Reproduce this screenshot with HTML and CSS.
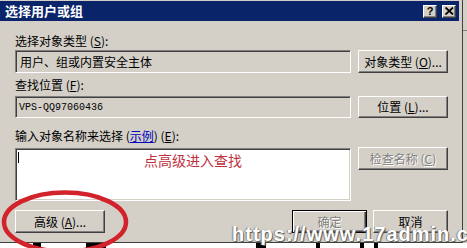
FILE: index.html
```html
<!DOCTYPE html>
<html>
<head>
<meta charset="utf-8">
<link rel="stylesheet" href="styles.css">
</head>
<body>
<div class="screen">
  <div class="dialog">
    <div class="titlebar">
      <span class="title">选择用户或组</span>
      <div class="tbtns">
        <span class="tbtn help">?</span>
        <span class="tbtn close"><svg width="9" height="8" viewBox="0 0 9 8"><path d="M0.5 0.5 L8 7.5 M8 0.5 L0.5 7.5" stroke="#000" stroke-width="1.8" fill="none"/></svg></span>
      </div>
    </div>
    <div class="content">
      <div class="label l1">选择对象类型 (<u>S</u>):</div>
      <div class="row r1">
        <div class="field ro">用户、组或内置安全主体</div>
        <div class="btn">对象类型 (<u>O</u>)...</div>
      </div>
      <div class="label l2">查找位置 (<u>F</u>):</div>
      <div class="row r2">
        <div class="field ro mono">VPS-QQ97060436</div>
        <div class="btn">位置 (<u>L</u>)...</div>
      </div>
      <div class="label l3">输入对象名称来选择 (<a class="link">示例</a>) (<u>E</u>):</div>
      <div class="row r3">
        <div class="field area"><span class="caret"></span><span class="hint">点高级进入查找</span></div>
        <div class="btn disabled">检查名称 (<u>C</u>)</div>
      </div>
      <div class="row bottom">
        <div class="btn adv">高级 (<u>A</u>)...</div>
        <div class="actions">
          <div class="btn default disabled">确定</div>
          <div class="btn">取消</div>
        </div>
      </div>
    </div>
  </div>
  <div class="side"></div>
  <div class="strip">
    <span class="bar b1"></span><span class="bar b2"></span><span class="bar b3"></span><span class="bar b4"></span><span class="bar b5"></span><span class="bar b6"></span>
  </div>
  <svg class="circle" width="140" height="62" viewBox="0 0 140 62"><ellipse cx="65" cy="34" rx="61" ry="29.5" fill="none" stroke="#d2222c" stroke-width="4.5"/></svg>
  <div class="watermark">https://www.17admin.cc</div>
</div>
</body>
</html>
```
FILE: styles.css
```css
* { box-sizing: border-box; }
html, body { margin: 0; padding: 0; }
body {
  width: 467px;
  height: 248px;
  overflow: hidden;
  background: #fff;
  font-family: "Noto Sans CJK SC", "Noto Sans", sans-serif;
  font-size: 12px;
  color: #000;
}
.screen {
  position: relative;
  width: 467px;
  height: 248px;
  display: grid;
  grid-template-columns: 463px 4px;
  grid-template-rows: 243px 5px;
}
.dialog {
  background: #d4d0c8;
  border-right: 1px solid #404040;
  border-bottom: 1px solid #404040;
  padding: 1px 3px 0 0;
  display: flex;
  flex-direction: column;
}
.side {
  background: #d4d0c8;
  border-top: 30px solid #d4d0c8;
  box-shadow: inset 0 31px 0 -30px #808080;
}
.strip {
  grid-column: 1 / 3;
  background: #fff;
  display: flex;
  align-items: stretch;
}
.bar { background: #000; display: block; }
.b1 { margin-left: 33px; width: 8px; }
.b2 { margin-left: 45px; width: 20px; }
.b3 { margin-left: 150px; width: 10px; }
.b4 { margin-left: 50px; width: 4px; }
.b5 { margin-left: 40px; width: 4px; }
.b6 { margin-left: 10px; width: 4px; }
.titlebar {
  height: 20px;
  background: #0a246a;
  display: flex;
  align-items: center;
  justify-content: space-between;
  padding: 0 3px 0 5px;
}
.title {
  color: #fff;
  font-weight: bold;
  font-size: 13px;
  letter-spacing: 0px;
  line-height: 20px;
}
.tbtns { display: flex; gap: 5px; }
.tbtn {
  width: 14px;
  height: 13px;
  background: #d4d0c8;
  border: 1px solid;
  border-color: #fff #404040 #404040 #fff;
  box-shadow: inset -1px -1px #808080;
  display: flex;
  align-items: center;
  justify-content: center;
  font-family: "Liberation Sans", sans-serif;
  font-weight: bold;
  font-size: 11px;
  line-height: 11px;
}
.content {
  padding: 13px 0 0 15px;
  display: flex;
  flex-direction: column;
}
.label { height: 14px; line-height: 14px; white-space: nowrap; }
.l2 { margin-top: 5px; }
.l3 { margin-top: 11px; }
.row { display: flex; gap: 7px; align-items: flex-start; }
.r1 { margin-top: 2px; }
.r2 { margin-top: 4px; }
.r3 { margin-top: 4px; }
.field {
  width: 336px;
  border: 1px solid;
  border-color: #808080 #fff #fff #808080;
  box-shadow: inset 1px 1px #404040, inset -1px -1px #d4d0c8;
  padding: 0 0 0 4px;
  white-space: nowrap;
}
.ro { background: #d4d0c8; }
.r1 .field { height: 23px; line-height: 21px; }
.r2 .field { height: 22px; line-height: 21px; }
.mono { font-family: "Liberation Mono", monospace; font-size: 10px; padding-left: 3px; }
.area {
  position: relative;
  height: 53px;
  margin-top: 1px;
  background: #fff;
  display: flex;
  justify-content: center;
  padding-top: 1px;
}
.caret {
  position: absolute;
  left: 2px;
  top: 3px;
  width: 1px;
  height: 11px;
  background: #000;
}
.hint {
  color: #c0303e;
  font-size: 14px;
  line-height: 20px;
  margin-left: 16px;
}
.btn {
  width: 90px;
  height: 23px;
  background: #d4d0c8;
  border: 1px solid;
  border-color: #fff #404040 #404040 #fff;
  box-shadow: inset -1px -1px #808080;
  display: flex;
  align-items: center;
  justify-content: center;
  white-space: nowrap;
  line-height: 14px;
}
.r2 .btn { height: 22px; }
.disabled { color: #808080; text-shadow: 1px 1px 0 #fff; }
.link { color: #0000c0; text-decoration: underline; }
.bottom {
  margin-top: 9px;
  justify-content: space-between;
  width: 433px;
}
.actions { display: flex; gap: 6px; }
.actions .btn { width: 75px; }
.btn.default {
  border: 1px solid #000;
  box-shadow: inset 1px 1px #fff, inset -1px -1px #404040, inset -2px -2px #808080;
}
.circle {
  position: absolute;
  left: 0;
  top: 188px;
}
.watermark {
  position: absolute;
  left: 232px;
  top: 223px;
  color: #fff;
  font-family: "Liberation Sans", sans-serif;
  font-weight: bold;
  font-size: 20px;
  letter-spacing: 1px;
  line-height: 22px;
  white-space: nowrap;
  text-shadow: 1px 1px 1px #555, -1px 0 1px #888;
}
```
